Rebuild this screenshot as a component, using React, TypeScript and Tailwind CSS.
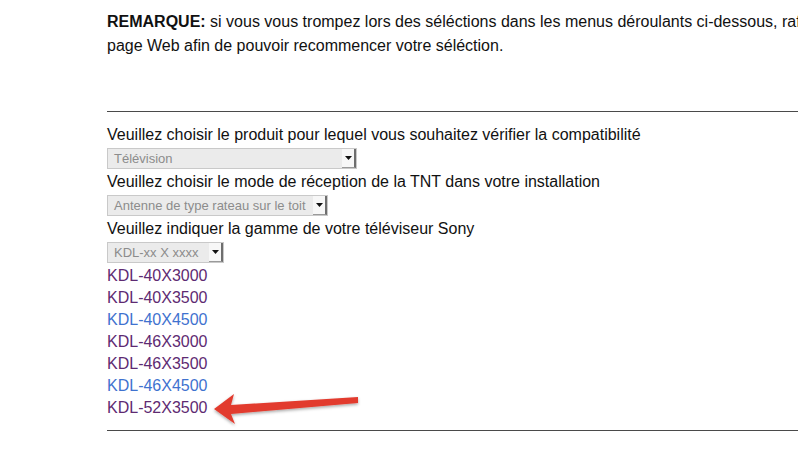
const links = [
  { label: 'KDL-40X3000', visited: true },
  { label: 'KDL-40X3500', visited: true },
  { label: 'KDL-40X4500', visited: false },
  { label: 'KDL-46X3000', visited: true },
  { label: 'KDL-46X3500', visited: true },
  { label: 'KDL-46X4500', visited: false },
  { label: 'KDL-52X3500', visited: true },
];

function FakeSelect({ value, width }: { value: string; width: string }) {
  return (
    <div
      className={`${width} h-[21px] my-[2px] flex items-stretch border border-[#c9c9c9] bg-[#ebebeb] text-[13px] text-[#8c8c8c] leading-[19px]`}
    >
      <span className="flex-1 pl-[6px] truncate">{value}</span>
      <span className="w-[14px] flex items-center justify-center bg-[#f7f7f7] border-r-2 border-r-[#6e6e6e] border-b border-b-[#9a9a9a]">
        <svg width="7" height="4" viewBox="0 0 7 4">
          <path d="M0 0h7L3.5 4z" fill="#111" />
        </svg>
      </span>
    </div>
  );
}

export default function App() {
  return (
    <div className="relative w-[798px] h-[474px] overflow-hidden bg-white font-['Liberation_Sans',Arial,sans-serif] text-[#111]">
      <div className="w-[1000px] pl-[107px] pt-[10px]">
        <p className="text-[16px] leading-[24px]">
          <b>REMARQUE:</b> si vous vous trompez lors des séléctions dans les menus déroulants ci-dessous, rafraîchissez la
          <br />
          page Web afin de pouvoir recommencer votre séléction.
        </p>

        <hr className="mt-[53px] border-0 border-t border-[#4a4a4a]" />

        <div className="mt-[12px] text-[16px] leading-[22px]">
          <div>Veuillez choisir le produit pour lequel vous souhaitez vérifier la compatibilité</div>
          <FakeSelect value="Télévision" width="w-[250px]" />
          <div>Veuillez choisir le mode de réception de la TNT dans votre installation</div>
          <FakeSelect value="Antenne de type rateau sur le toit" width="w-[221px]" />
          <div>Veuillez indiquer la gamme de votre téléviseur Sony</div>
          <FakeSelect value="KDL-xx X xxxx" width="w-[117px]" />

          <ul>
            {links.map((l) => (
              <li key={l.label}>
                <a href="#" className={l.visited ? 'text-[#5e2a72]' : 'text-[#3f72cf]'}>
                  {l.label}
                </a>
              </li>
            ))}
          </ul>
        </div>

        <hr className="mt-[11px] border-0 border-t border-[#4a4a4a]" />
      </div>

      {/* red annotation arrow */}
      <svg className="absolute left-0 top-0 pointer-events-none" width="798" height="474">
        <defs>
          <filter id="sh" x="-20%" y="-50%" width="140%" height="200%">
            <feDropShadow dx="0" dy="1.5" stdDeviation="1.5" floodColor="#000" floodOpacity="0.35" />
          </filter>
        </defs>
        <path
          d="M214 409 L234 394 L231 405 L358 397 L358 403 L231 414 L235 424 Z"
          fill="#e23b2e"
          filter="url(#sh)"
        />
      </svg>
    </div>
  );
}
